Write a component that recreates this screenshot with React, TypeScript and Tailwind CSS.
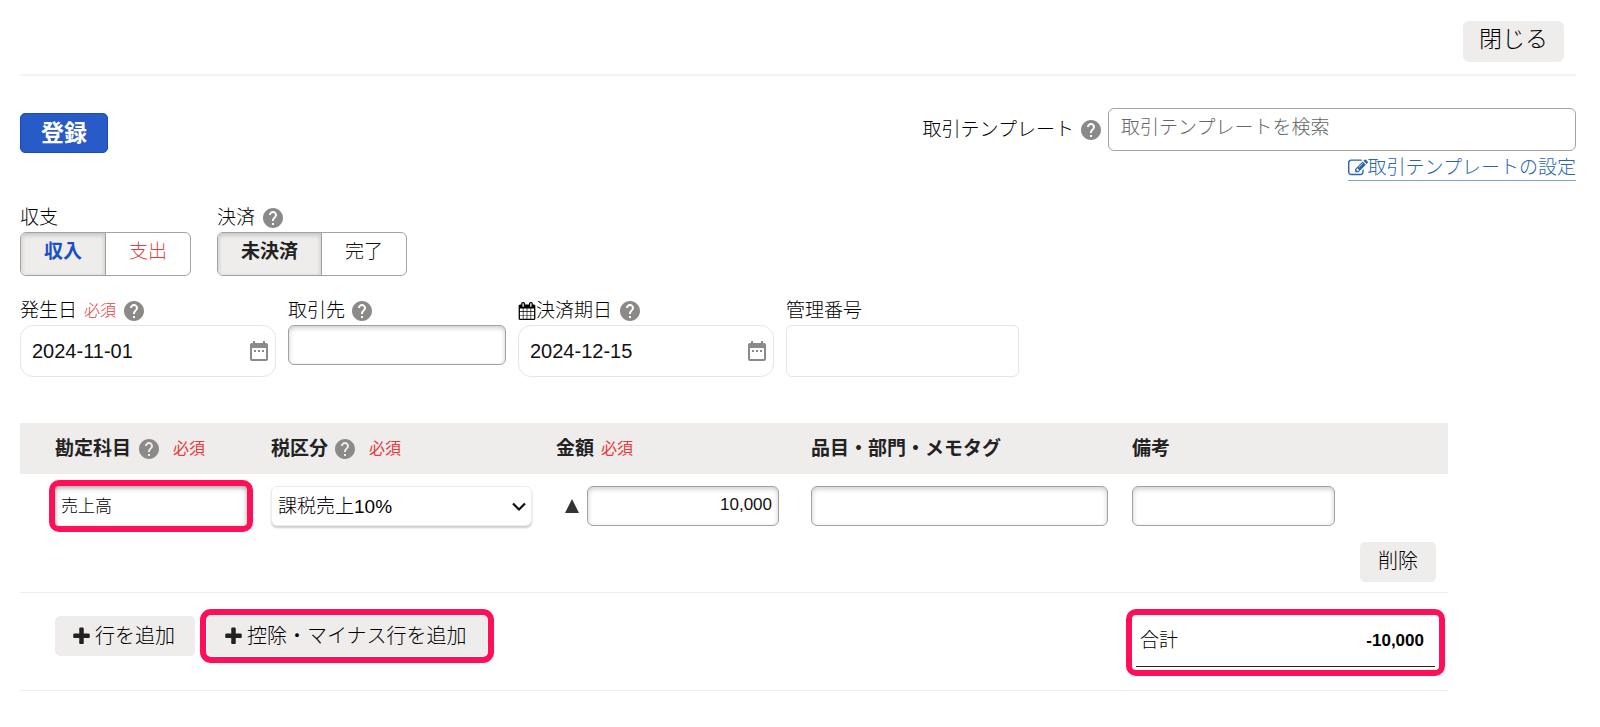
import type { ReactNode } from "react";
import { MdDateRange, MdHelp } from "react-icons/md";

const field =
  "rounded-md border border-[#a3a2a2] bg-white shadow-[inset_0_2px_5px_rgba(0,0,0,0.2)]";
const outlined =
  "rounded-sm outline-[6px] outline-solid outline-[#ff0f57]";

function Glyph({ d, className }: { d: string; className: string }) {
  return (
    <svg viewBox="0 0 1792 1792" fill="currentColor" aria-hidden="true" className={className}>
      <path d={d} />
    </svg>
  );
}

const PLUS =
  "M1600 736v192q0 40-28 68t-68 28h-416v416q0 40-28 68t-68 28h-192q-40 0-68-28t-28-68v-416h-416q-40 0-68-28t-28-68v-192q0-40 28-68t68-28h416v-416q0-40 28-68t68-28h192q40 0 68 28t28 68v416h416q40 0 68 28t28 68z";
const EDIT =
  "M888 1184l116-116-152-152-116 116v56h96v96h56zm440-720q-16-16-33 1l-350 350q-17 17-1 33t33-1l350-350q17-17 1-33zm80 594v190q0 119-84.5 203.5t-203.5 84.5h-832q-119 0-203.5-84.5t-84.5-203.5v-832q0-119 84.5-203.5t203.5-84.5h832q63 0 117 25 15 7 18 23 3 17-9 29l-49 49q-14 14-32 8-23-6-45-6h-832q-66 0-113 47t-47 113v832q0 66 47 113t113 47h832q66 0 113-47t47-113v-126q0-13 9-22l64-64q15-15 35-7t20 29zm-96-738l288 288-672 672h-288v-288zm444 132l-92 92-288-288 92-92q28-28 68-28t68 28l152 152q28 28 28 68t-28 68z";
const CALENDAR =
  "M192 1664h288v-288h-288v288zm352 0h320v-288h-320v288zm-352-352h288v-320h-288v320zm352 0h320v-320h-320v320zm-352-384h288v-288h-288v288zm736 736h320v-288h-320v288zm-384-736h320v-288h-320v288zm768 736h288v-288h-288v288zm-384-352h320v-320h-320v320zm-352-864v-288q0-13-9.5-22.5t-22.5-9.5h-64q-13 0-22.5 9.5t-9.5 22.5v288q0 13 9.5 22.5t22.5 9.5h64q13 0 22.5-9.5t9.5-22.5zm736 864h288v-320h-288v320zm-384-384h320v-288h-320v288zm384 0h288v-288h-288v288zm32-480v-288q0-13-9.5-22.5t-22.5-9.5h-64q-13 0-22.5 9.5t-9.5 22.5v288q0 13 9.5 22.5t22.5 9.5h64q13 0 22.5-9.5t9.5-22.5zm384-64v1280q0 52-38 90t-90 38h-1408q-52 0-90-38t-38-90v-1280q0-52 38-90t90-38h128v-96q0-66 47-113t113-47h64q66 0 113 47t47 113v96h384v-96q0-66 47-113t113-47h64q66 0 113 47t47 113v96h128q52 0 90 38t38 90z";

function Help() {
  return (
    <button type="button" aria-label="ヘルプ" className="shrink-0 text-[#8c8989]">
      <MdHelp className="size-6" />
    </button>
  );
}

function Required({ className = "font-light" }: { className?: string }) {
  return <span className={"text-base leading-6 text-[#e53c3c] " + className}>必須</span>;
}

function Choice({ name, label, checked, className }: { name: string; label: string; checked?: boolean; className: string }) {
  return (
    <label
      className={
        "flex h-full cursor-pointer items-center justify-center px-[23px] pb-1 has-checked:bg-[#efedec] has-checked:font-bold has-checked:shadow-[inset_0_2px_5px_rgba(0,0,0,0.2)] " +
        className
      }
    >
      <input type="radio" name={name} defaultChecked={checked} className="sr-only" />
      {label}
    </label>
  );
}

function Field({ label, className, children }: { label: ReactNode; className: string; children: ReactNode }) {
  return (
    <div className={className}>
      <div className="flex h-7 items-center">{label}</div>
      {children}
    </div>
  );
}

function DateBox({ id, value }: { id: string; value: string }) {
  return (
    <div className="flex h-[52px] items-center rounded-[13px] border border-[#e7e6df] pr-1 pl-[11px]">
      <input id={id} type="text" defaultValue={value} className="min-w-0 flex-1 text-xl text-[#111] outline-none" />
      <button type="button" aria-label="カレンダーを開く" className="text-[#8c8989]">
        <MdDateRange className="size-6" />
      </button>
    </div>
  );
}

export default function App() {
  return (
    <main className="bg-white pr-6 pb-9 pl-5 font-['Liberation_Sans','Noto_Sans_CJK_JP',sans-serif] text-[19px] leading-7 font-light text-black">
      <header className="flex justify-end border-b-2 border-[#f4f4f4] pt-[21px] pr-3 pb-3">
        <button type="button" className="h-[41px] rounded-md bg-[#efedec] px-4 pb-1 text-[23px] leading-none">
          閉じる
        </button>
      </header>

      <div className="flex items-start justify-between pt-8">
        <button
          type="button"
          className="mt-[5px] h-10 rounded-[5px] border border-[#1a4cc0] bg-[#285ac8] px-5 text-[23px] leading-none font-bold text-white"
        >
          登録
        </button>
        <div className="flex flex-col items-end">
          <div className="flex items-center">
            <label htmlFor="template">取引テンプレート</label>
            <span className="mr-[5px] ml-[5px] flex">
              <Help />
            </span>
            <input
              id="template"
              type="text"
              placeholder="取引テンプレートを検索"
              className="h-[43px] w-[468px] rounded-md border border-[#a3a2a2] px-3 pb-1 placeholder:text-[#666]"
            />
          </div>
          <a
            href="#template-settings"
            className="mt-1 flex h-[26px] items-center border-b border-[#7fa2d2] text-[#2864b0]"
          >
            <Glyph d={EDIT} className="size-5" />
            取引テンプレートの設定
          </a>
        </div>
      </div>

      <div className="mt-[23px] flex gap-[26px]">
        <fieldset>
          <legend className="h-7">収支</legend>
          <div className="flex h-11 overflow-hidden rounded-md border border-[#a3a2a2]">
            <Choice name="balance" label="収入" checked className="border-r border-[#a3a2a2] text-[#1a4fc9]" />
            <Choice name="balance" label="支出" className="text-[#e53c3c]" />
          </div>
        </fieldset>
        <fieldset>
          <legend className="flex h-7 items-center gap-[6px]">
            決済
            <Help />
          </legend>
          <div className="flex h-11 overflow-hidden rounded-md border border-[#a3a2a2]">
            <Choice name="settlement" label="未決済" checked className="border-r border-[#a3a2a2] text-[#222]" />
            <Choice name="settlement" label="完了" className="text-[#111]" />
          </div>
        </fieldset>
      </div>

      <div className="mt-[21px] flex items-start gap-3">
        <Field
          className="w-64"
          label={
            <>
              <label htmlFor="date" className="mr-[6px] flex items-center gap-[7px]">
                発生日
                <Required />
              </label>
              <Help />
            </>
          }
        >
          <DateBox id="date" value="2024-11-01" />
        </Field>
        <Field
          className="w-[218px]"
          label={
            <>
              <label htmlFor="partner" className="mr-[5px]">
                取引先
              </label>
              <Help />
            </>
          }
        >
          <input id="partner" type="text" className={"block h-10 w-full px-2 " + field} />
        </Field>
        <Field
          className="w-64"
          label={
            <>
              <label htmlFor="due" className="mr-[6px] flex items-center">
                <Glyph d={CALENDAR} className="size-[18px]" />
                決済期日
              </label>
              <Help />
            </>
          }
        >
          <DateBox id="due" value="2024-12-15" />
        </Field>
        <Field className="w-[233px]" label={<label htmlFor="number">管理番号</label>}>
          <input id="number" type="text" className="block h-[52px] w-full rounded-md border border-[#e7e6df] px-3" />
        </Field>
      </div>

      <div className="mt-[46px] mr-32">
        <table className="w-full table-fixed border-b border-[#ececec] text-left">
          <colgroup>
            <col className="w-[239px]" />
            <col className="w-[285px]" />
            <col className="w-[255px]" />
            <col className="w-[321px]" />
            <col className="w-[328px]" />
          </colgroup>
          <thead className="bg-[#efedec] text-[#222]">
            <tr className="h-[51px]">
              <th scope="col" className="pl-[35px]">
                <div className="flex items-center">
                  <span className="mr-[6px]">勘定科目</span>
                  <Help />
                  <span className="ml-3 flex">
                    <Required className="font-normal" />
                  </span>
                </div>
              </th>
              <th scope="col" className="pl-3">
                <div className="flex items-center">
                  <span className="mr-[5px]">税区分</span>
                  <Help />
                  <span className="ml-3 flex">
                    <Required className="font-normal" />
                  </span>
                </div>
              </th>
              <th scope="col" className="pl-3">
                <div className="flex items-center gap-[7px]">
                  金額
                  <Required className="font-normal" />
                </div>
              </th>
              <th scope="col" className="pl-3">
                品目・部門・メモタグ
              </th>
              <th scope="col" className="pl-3">
                備考
              </th>
            </tr>
          </thead>
          <tbody>
            <tr className="h-16 align-top">
              <td className="pt-3 pr-3 pl-[35px]">
                <input
                  type="text"
                  aria-label="勘定科目"
                  defaultValue="売上高"
                  className={
                    "block h-10 w-full bg-white px-[6px] pb-1 text-[17px] shadow-[inset_0_2px_5px_rgba(0,0,0,0.35)] " + outlined
                  }
                />
              </td>
              <td className="px-3 pt-3">
                <div className="relative">
                  <select
                    aria-label="税区分"
                    className="block h-10 w-full appearance-none rounded-md border border-[#ececec] bg-white pt-[2px] pr-8 pl-[6px] shadow-[0_2px_2px_rgba(0,0,0,0.2)]"
                  >
                    <option>課税売上10%</option>
                  </select>
                  <svg
                    viewBox="0 0 14 10"
                    fill="none"
                    stroke="#111"
                    strokeWidth="2.2"
                    aria-hidden="true"
                    className="pointer-events-none absolute top-4 right-[6px] h-[10px] w-[14px]"
                  >
                    <path d="M1 1.5l6 6 6-6" />
                  </svg>
                </div>
              </td>
              <td className="pt-3 pr-5 pl-3">
                <div className="flex items-center justify-end gap-2">
                  <svg viewBox="0 0 14 14" fill="#333" aria-hidden="true" className="size-[14px]">
                    <path d="M7 0l7 14H0z" />
                  </svg>
                  <input
                    type="text"
                    aria-label="金額"
                    defaultValue="10,000"
                    className={"h-10 w-48 px-[6px] pb-[2px] text-right text-[17px] text-[#111] " + field}
                  />
                </div>
              </td>
              <td className="px-3 pt-3">
                <input type="text" aria-label="品目・部門・メモタグ" className={"block h-10 w-full px-2 " + field} />
              </td>
              <td className="px-3 pt-3">
                <input type="text" aria-label="備考" className={"block h-10 w-[203px] px-2 " + field} />
              </td>
            </tr>
            <tr>
              <td colSpan={5} className="pt-1 pr-3 pb-[10px] text-right align-top">
                <button type="button" className="ml-auto block h-10 rounded-[5px] bg-[#efedec] px-[18px] pb-[2px] text-xl leading-none">
                  削除
                </button>
              </td>
            </tr>
          </tbody>
        </table>

        <div className="flex items-start justify-between border-b border-[#ececec] pt-[22px] pr-[9px] pb-5 pl-[35px]">
          <div className="flex gap-3 pt-[1px]">
            <button type="button" className="flex h-10 items-center gap-[3px] rounded-[5px] bg-[#efedec] pr-5 pl-4 text-xl leading-none">
              <Glyph d={PLUS} className="size-[21px] text-[#222]" />
              行を追加
            </button>
            <button
              type="button"
              className={"flex h-10 items-center gap-[3px] bg-[#efedec] pr-5 pl-4 text-xl leading-none outline-offset-1 " + outlined}
            >
              <Glyph d={PLUS} className="size-[21px] text-[#222]" />
              控除・マイナス行を追加
            </button>
          </div>
          <div className={"w-[307px] px-1 pb-[3px] " + outlined}>
            <dl className="flex h-[52px] items-center justify-between border-b border-[#222] pr-[11px] pl-1">
              <dt>合計</dt>
              <dd className="text-[17px] font-bold">-10,000</dd>
            </dl>
          </div>
        </div>
      </div>
    </main>
  );
}
